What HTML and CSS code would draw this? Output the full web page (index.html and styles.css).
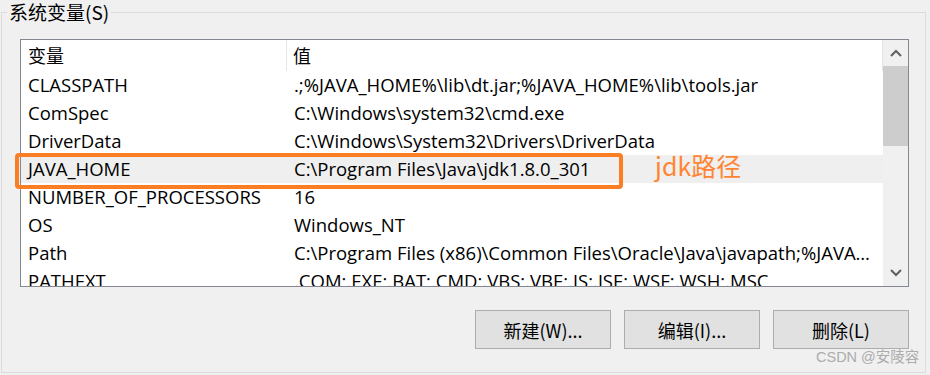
FILE: index.html
```html
<!DOCTYPE html>
<html lang="zh-CN">
<head>
<meta charset="utf-8">
<title>系统变量</title>
<link rel="stylesheet" href="styles.css">
</head>
<body>
<div class="page">
<fieldset class="group">
  <legend>系统变量(S)</legend>
  <div class="list">
    <div class="table">
      <div class="head"><span class="c1">变量</span><span class="c2">值</span></div>
      <div class="row"><span class="c1">CLASSPATH</span><span class="c2">.;%JAVA_HOME%\lib\dt.jar;%JAVA_HOME%\lib\tools.jar</span></div>
      <div class="row"><span class="c1">ComSpec</span><span class="c2">C:\Windows\system32\cmd.exe</span></div>
      <div class="row"><span class="c1">DriverData</span><span class="c2">C:\Windows\System32\Drivers\DriverData</span></div>
      <div class="row hot"><span class="c1">JAVA_HOME</span><span class="c2">C:\Program Files\Java\jdk1.8.0_301</span></div>
      <div class="row"><span class="c1">NUMBER_OF_PROCESSORS</span><span class="c2">16</span></div>
      <div class="row"><span class="c1">OS</span><span class="c2">Windows_NT</span></div>
      <div class="row"><span class="c1">Path</span><span class="c2">C:\Program Files (x86)\Common Files\Oracle\Java\javapath;%JAVA_HOME%\bin;%JAVA_HOME%\jre\bin</span></div>
      <div class="row"><span class="c1">PATHEXT</span><span class="c2">.COM;.EXE;.BAT;.CMD;.VBS;.VBE;.JS;.JSE;.WSF;.WSH;.MSC</span></div>
    </div>
    <div class="scrollbar">
      <span class="arrow"><svg width="12" height="8" viewBox="0 0 12 8"><polyline points="1,7 6,2 11,7" fill="none" stroke="#606060" stroke-width="2"/></svg></span>
      <span class="thumb"></span>
      <span class="track"></span>
      <span class="arrow"><svg width="12" height="8" viewBox="0 0 12 8"><polyline points="1,1 6,6 11,1" fill="none" stroke="#606060" stroke-width="2"/></svg></span>
    </div>
  </div>
  <div class="buttons">
    <button class="btn">新建(W)...</button>
    <button class="btn">编辑(I)...</button>
    <button class="btn">删除(L)</button>
  </div>
</fieldset>
<div class="mark"></div>
<div class="note">jdk路径</div>
<div class="watermark">CSDN @安陵容</div>
</div>
</body>
</html>
```

FILE: styles.css
```css
body { margin: 0; background: #f0f0f0; font-family: "Open Sans", "Noto Sans CJK SC", sans-serif; color: #000; }
.page { position: relative; width: 930px; height: 375px; overflow: hidden; }

.group { min-width: 0; margin: 0 4px 0 1px; padding: 15px 16px 23px 18px; border: 1px solid #dcdcdc; }
.group legend { margin-left: -13px; padding: 0 2px; font-family: "Noto Sans CJK SC", sans-serif; font-size: 19px; line-height: 24px; color: #000; }

.list { display: flex; height: 246px; border: 1px solid #828790; background: #fff; overflow: hidden; }
.table { flex: 1; min-width: 0; overflow: hidden; }
.head, .row { display: flex; font-size: 18.5px; white-space: nowrap; }
.head { height: 31px; line-height: 31px; font-family: "Noto Sans CJK SC", sans-serif; font-size: 18px; }
.row { height: 28px; line-height: 28px; }
.row.hot { background: #efefef; }
.c1 { width: 266px; padding-left: 7px; box-sizing: border-box; flex: none; }
.head .c1 { border-right: 1px solid #e5e5e5; }
.c2 { flex: 1; min-width: 0; padding-left: 7px; padding-right: 6px; overflow: hidden; text-overflow: ellipsis; }
.head .c2 { padding-left: 6px; border-right: 1px solid #e5e5e5; }

.scrollbar { width: 25px; flex: none; display: flex; flex-direction: column; background: #f0f0f0; }
.arrow { height: 26px; display: flex; align-items: center; justify-content: center; flex: none; }
.thumb { height: 80px; background: #cdcdcd; flex: none; }
.track { flex: 1; }

.buttons { display: flex; justify-content: flex-end; gap: 13px; margin-top: 23px; }
.btn { width: 136px; height: 39px; border: 1px solid #adadad; background: #e1e1e1; font-family: "Noto Sans CJK SC", sans-serif; font-size: 18px; color: #000; padding: 0; }

.mark { position: absolute; left: 15px; top: 153px; width: 600px; height: 28px; border: 4px solid #fb7d24; border-radius: 4px; }
.note { position: absolute; left: 655px; top: 148px; font-family: "Noto Sans CJK SC", sans-serif; font-size: 25px; line-height: 34px; color: #ff8533; }
.watermark { position: absolute; left: 816px; top: 347px; font-family: "Liberation Sans", "Noto Sans CJK SC", sans-serif; font-size: 14.5px; line-height: 20px; color: #acacac; }
```
